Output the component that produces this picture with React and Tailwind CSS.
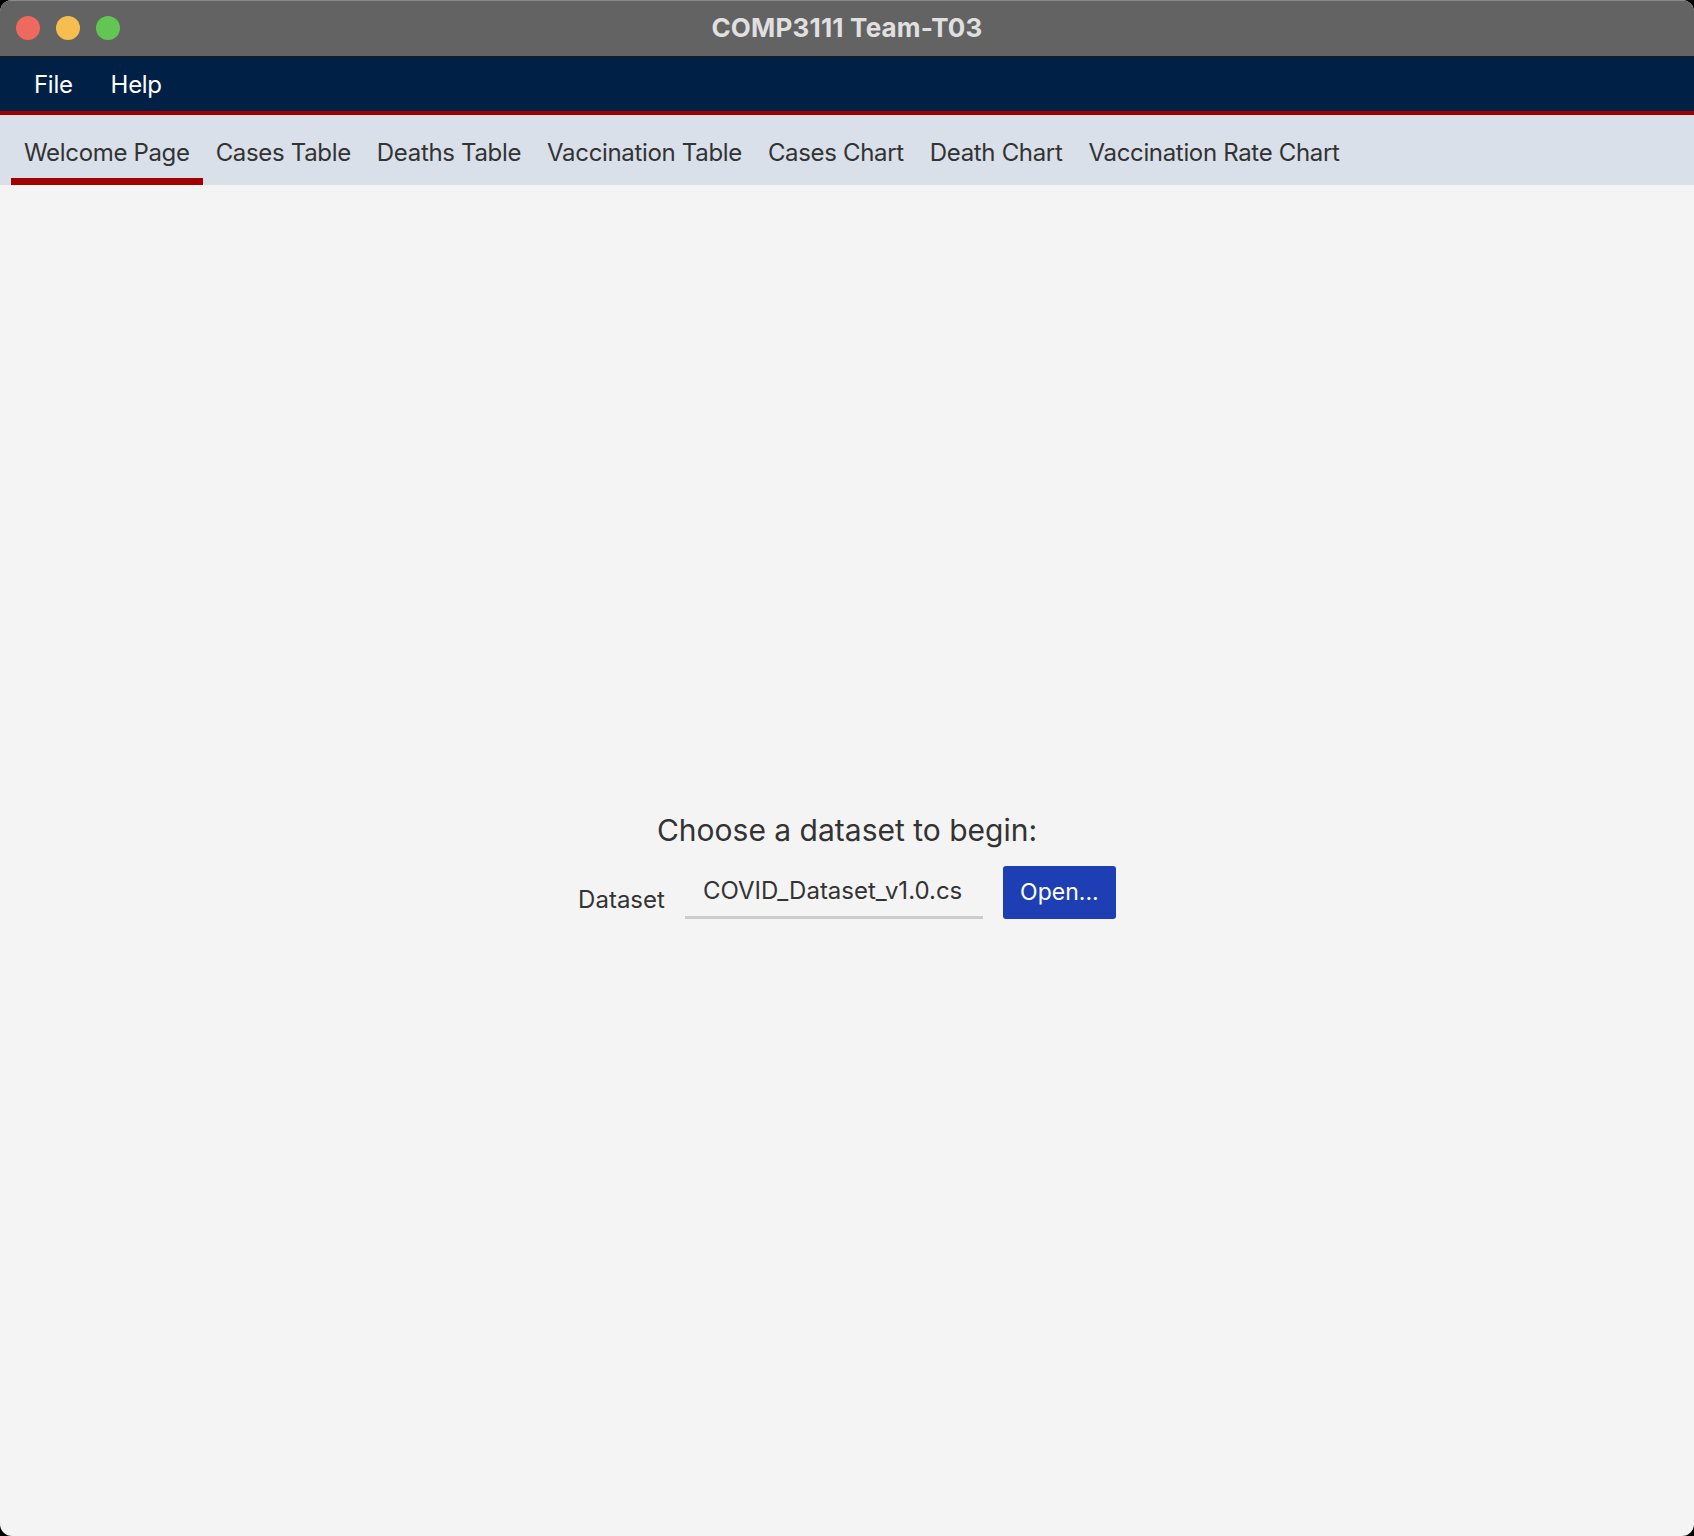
import React, { useState } from 'react';

const tabs = [
  'Welcome Page',
  'Cases Table',
  'Deaths Table',
  'Vaccination Table',
  'Cases Chart',
  'Death Chart',
  'Vaccination Rate Chart',
];

const App = () => {
  const [active, setActive] = useState(0);

  return (
    <div className="w-[1694px] h-[1536px] bg-black" style={{ fontFamily: 'Inter, "Noto Sans", sans-serif' }}>
      <div className="w-full h-full flex flex-col rounded-[12px] overflow-hidden bg-[#f4f4f4]">
        {/* title bar */}
        <div className="relative h-[57px] shrink-0 bg-[#636363] border-t border-[#8a8a8a] flex items-center justify-center pb-[2px] border-b border-b-[#1b1b1b]">
          <div className="absolute left-[16px] top-[15px] flex gap-[16px]">
            <span className="w-[24px] h-[24px] rounded-full bg-[#ee6a5f]" />
            <span className="w-[24px] h-[24px] rounded-full bg-[#f5be4f]" />
            <span className="w-[24px] h-[24px] rounded-full bg-[#62c554]" />
          </div>
          <span className="text-[26px] font-bold text-[#e0e0e0] tracking-[0.2px]">COMP3111 Team-T03</span>
        </div>

        {/* menu bar */}
        <div className="h-[54px] shrink-0 bg-[#002046] flex items-center pt-[1px] pl-[34px] gap-[38px] text-white text-[24px] tracking-[-0.3px]">
          <span>File</span>
          <span>Help</span>
        </div>
        <div className="h-[4px] shrink-0 bg-[#a00000]" />

        {/* tabs */}
        <div className="h-[70px] shrink-0 bg-[#d9e0ea] flex items-stretch pl-[11px]">
          {tabs.map((t, i) => (
            <button
              key={t}
              onClick={() => setActive(i)}
              className={`px-[13px] pt-[12px] text-[24px] tracking-[-0.33px] text-[#333333] border-b-[7px] ${
                i === active ? 'border-[#a00000]' : 'border-transparent'
              }`}
            >
              {t}
            </button>
          ))}
        </div>

        {/* content */}
        <div className="flex-1 flex flex-col items-center justify-center pt-[8px]">
          <div className="text-[30px] leading-[40px] text-[#333333] mb-[16px]">Choose a dataset to begin:</div>
          <div className="flex items-end gap-[20px]">
            <span className="text-[24px] leading-[30px] text-[#333333] mb-[4px]">Dataset</span>
            <div className="w-[298px] h-[53px] border-b-[3px] border-[#cccccc] flex items-center pl-[18px] pr-[10px] text-[24px] text-[#333333] overflow-hidden whitespace-nowrap">
              COVID_Dataset_v1.0.cs
            </div>
            <button className="w-[113px] h-[53px] bg-[#1e3fb4] rounded-[3px] text-white text-[23px]">Open...</button>
          </div>
        </div>
      </div>
    </div>
  );
};

export default App;
